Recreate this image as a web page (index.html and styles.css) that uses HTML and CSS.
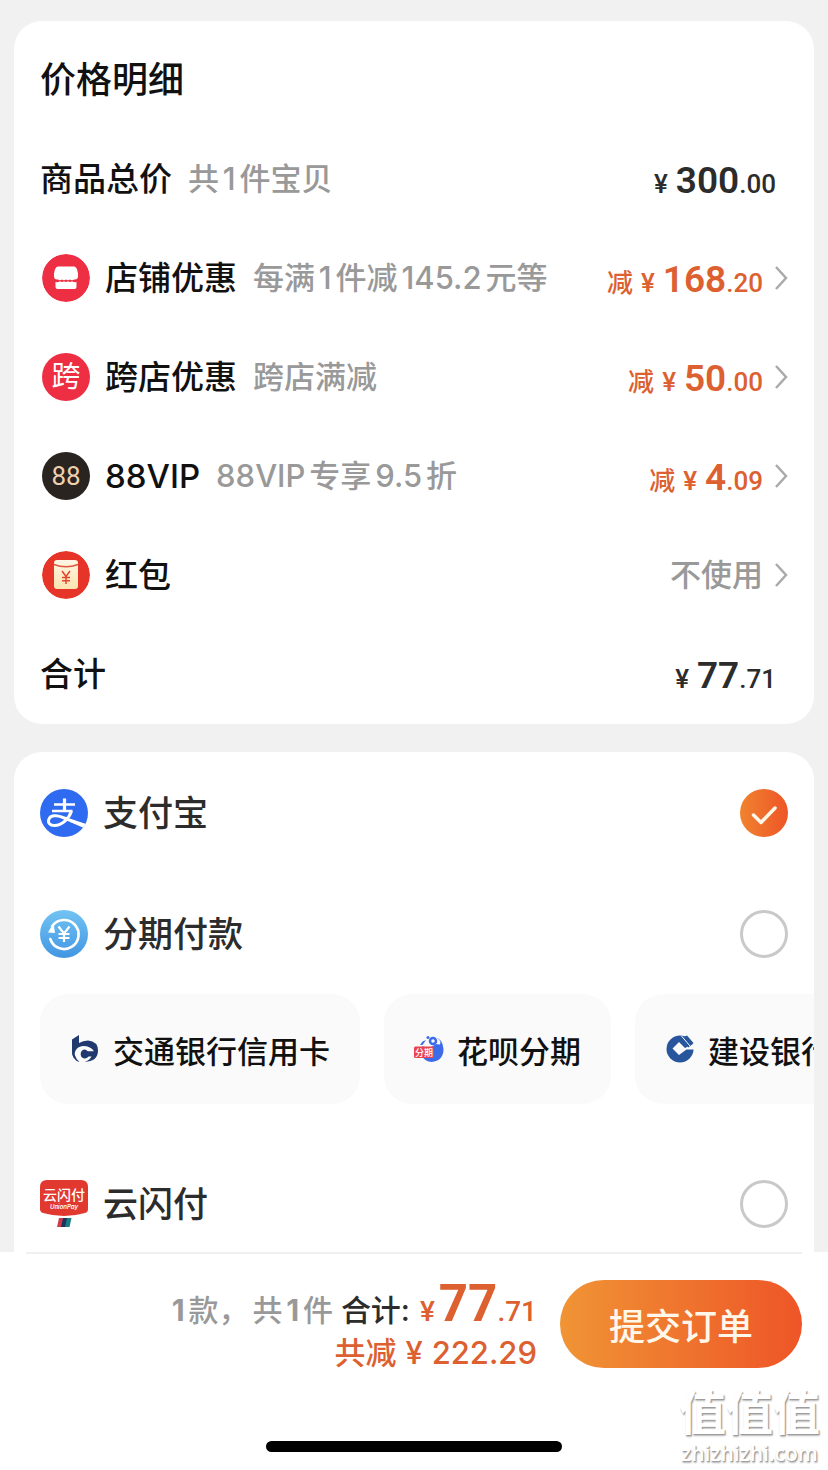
FILE: index.html
```html
<!DOCTYPE html>
<html lang="zh-CN">
<head>
<meta charset="utf-8">
<meta name="viewport" content="width=device-width, initial-scale=1">
<title>确认订单</title>
<link rel="stylesheet" href="styles.css">
</head>
<body>
<main class="content">
  <section class="card prices">
    <h1 class="title">价格明细</h1>
    <div class="row">
      <span class="label">商品总价</span><span class="note">共1件宝贝</span>
      <span class="amount plain"><span class="yen">¥</span><b>300</b><span>.00</span></span>
    </div>
    <div class="row">
      <svg class="badge" viewBox="0 0 48 48" aria-hidden="true"><circle cx="24" cy="24" r="24" fill="#ee2f43"/><path d="M16 12.500h16q3 0 4 7v2.500q0 4-4 3.500-2 1.500-4 0-2 1.500-4 0-2 1.500-4 0-2 1.500-4 0-4 .5-4-3.500v-2.500q1-7 4-7z" fill="#fff"/><path d="M13.500 28q2.500.5 4.500-.8 2 1.500 4 0 2 1.500 4 0 2 1.500 4 0 2 1.300 4.500.8v5q0 2-2 2h-17q-2 0-2-2z" fill="#fff"/></svg>
      <span class="label">店铺优惠</span><span class="note">每满1件减145.2元等</span>
      <button class="amount link"><span class="cut">减</span><span class="yen">¥</span><b>168</b><span>.20</span><svg class="chev" viewBox="0 0 14 26" aria-hidden="true"><path d="M2 2l10 11L2 24"/></svg></button>
    </div>
    <div class="row">
      <span class="badge badge-red" aria-hidden="true">跨</span>
      <span class="label">跨店优惠</span><span class="note">跨店满减</span>
      <button class="amount link"><span class="cut">减</span><span class="yen">¥</span><b>50</b><span>.00</span><svg class="chev" viewBox="0 0 14 26" aria-hidden="true"><path d="M2 2l10 11L2 24"/></svg></button>
    </div>
    <div class="row">
      <span class="badge badge-vip" aria-hidden="true">88</span>
      <span class="label">88VIP</span><span class="note">88VIP专享9.5折</span>
      <button class="amount link"><span class="cut">减</span><span class="yen">¥</span><b>4</b><span>.09</span><svg class="chev" viewBox="0 0 14 26" aria-hidden="true"><path d="M2 2l10 11L2 24"/></svg></button>
    </div>
    <div class="row">
      <svg class="badge" viewBox="0 0 48 48" aria-hidden="true"><defs><linearGradient id="env" x1="0" y1="0" x2="0" y2="1"><stop offset="0" stop-color="#fff6e4"/><stop offset="1" stop-color="#fce3b0"/></linearGradient></defs><circle cx="24" cy="24" r="24" fill="#e63528"/><rect x="12" y="9" width="24" height="29" rx="3" fill="url(#env)"/><path d="M12 13.500q12 4.500 24 0" fill="none" stroke="#e2553f" stroke-width="1.500"/><path d="M20 20l4 5.500 4-5.500M24 25.500V33M20 26.500h8M20 29.700h8" fill="none" stroke="#e2452f" stroke-width="1.500"/></svg>
      <span class="label">红包</span>
      <button class="link unused">不使用<svg class="chev" viewBox="0 0 14 26" aria-hidden="true"><path d="M2 2l10 11L2 24"/></svg></button>
    </div>
    <div class="row">
      <span class="label">合计</span>
      <span class="amount plain"><span class="yen">¥</span><b>77</b><span>.71</span></span>
    </div>
  </section>

  <section class="card pay">
    <label class="method">
      <svg class="badge" viewBox="0 0 48 48" aria-hidden="true"><defs><clipPath id="disc"><circle cx="24" cy="24" r="24"/></clipPath></defs><circle cx="24" cy="24" r="24" fill="#2f6bf0"/><g clip-path="url(#disc)" fill="none" stroke="#fff"><path d="M14 15.500h21M12 22h20.500" stroke-width="2.600"/><path d="M24.500 9.500V22" stroke-width="3.200"/><path d="M31.500 22C29 29.500 22 36.500 14.500 36.500c-5 0-7-3-5.500-6.500 1.500-3.500 7-4.500 13-1.800C29 31.200 38 34 50 38" stroke-width="3"/><path d="M31 30.500l14 4.500-1 4-14-6z" fill="#fff" stroke="none"/></g></svg>
      <span class="name">支付宝</span>
      <span class="pick"><input type="radio" name="pay" checked><svg class="tick" viewBox="0 0 48 48" aria-hidden="true"><path d="M13.500 26l7.500 7.500L35 19"/></svg></span>
    </label>
    <label class="method">
      <svg class="badge" viewBox="0 0 48 48" aria-hidden="true"><defs><linearGradient id="sky" x1="0" y1="0" x2="0" y2="1"><stop offset="0" stop-color="#72c3f3"/><stop offset="1" stop-color="#4296e2"/></linearGradient></defs><circle cx="24" cy="24" r="24" fill="url(#sky)"/><path d="M12 16.500A14.500 14.500 0 1 1 10.300 29" fill="none" stroke="#fff" stroke-width="2.600" stroke-linecap="round"/><path d="M13.500 13l1.500 10-7-.5z" fill="#fff"/><path d="M18.500 16.500l5.500 7 5.500-7M24 23.500V32M18.500 24h11M18.500 28h11" fill="none" stroke="#fff" stroke-width="2.200"/></svg>
      <span class="name">分期付款</span>
      <span class="pick"><input type="radio" name="pay"><svg class="tick" viewBox="0 0 48 48" aria-hidden="true"><path d="M13.500 26l7.500 7.500L35 19"/></svg></span>
    </label>
    <div class="tiles">
      <button class="tile"><svg class="logo" viewBox="0 0 30 30" aria-hidden="true"><path d="M2 5.500L9 1v8q4-2.500 9-2.500 10 1 10 10 0 10.500-13 11.500Q8 28.500 4 24 2 21 2 16z" fill="#20396f"/><path d="M4 27q-1-14 9-15 8 0 11 5.500H18q-4-4-7 .5-1.500 5 3 6.500 3 .3 4.500-2H25q-3.500 6-10 6.500z" fill="#fafafa"/><path d="M5 13.500Q2.500 22 9.500 28 2 26 2 17z" fill="#20396f"/><path d="M14.500 17.500h11v4h-8q-3 2-4-.500-.5-2.500 1-3.500z" fill="#20396f"/><path d="M27 16.500q0 10.500-12 11.500 5-2 7-6.500z" fill="#20396f"/></svg>交通银行信用卡</button>
      <button class="tile"><svg class="logo" viewBox="0 0 30 30" aria-hidden="true"><path d="M8.500 7.500l3.500-1.500-3.500 5H6zM20 2.500q9 2.500 9.500 12.500 0 12-12 13-6-.5-9-5V12q5 3 9 1.500 8-.5 9-4.500 0-4-6.500-6.500z" fill="#3e6bea"/><circle cx="19" cy="7" r="3" fill="none" stroke="#3e6bea" stroke-width="2.500"/><path d="M22 10l6 1-2 8-10-5z" fill="#3e6bea"/><circle cx="14" cy="3.500" r="1.500" fill="#3e6bea"/><rect y="12.500" width="20" height="11.500" rx="1.500" fill="#e84352"/><text class="mini" x="10" y="21.500">分期</text></svg>花呗分期</button>
      <button class="tile"><svg class="logo" viewBox="0 0 30 30" aria-hidden="true"><circle cx="15" cy="15" r="13.500" fill="#28569d"/><path d="M14 8l6 6L30 9v6.500h-8.500L14 21l-6.500-6.500z" fill="#fafafa"/><path d="M16 4l7.500 9.500 5-4.500L22 1.500z" fill="#28569d"/><path d="M16.500 2l8.500 10" stroke="#fafafa" stroke-width="1"/></svg>建设银行</button>
    </div>
    <label class="method last">
      <svg class="badge" viewBox="0 0 48 48" aria-hidden="true"><path d="M7 0h34q7 0 7 7v22q0 3-3 4-21 6-42 0-3-1-3-4V7q0-7 7-7z" fill="#e1382f"/><text class="union" x="24" y="20">云闪付</text><text class="union-en" x="24" y="28.500">UnionPay</text><path d="M19 38h5l-2 9h-5z" fill="#cc3b4b"/><path d="M23 38h5l-2 9h-5z" fill="#1f3557"/><path d="M27 38h4.500l-2 9H25z" fill="#177d87"/></svg>
      <span class="name">云闪付</span>
      <span class="pick"><input type="radio" name="pay"><svg class="tick" viewBox="0 0 48 48" aria-hidden="true"><path d="M13.500 26l7.500 7.500L35 19"/></svg></span>
    </label>
  </section>
</main>

<footer class="bar">
  <div class="checkout">
    <div class="sums">
      <div class="sum"><span class="count"><b>1</b>款，</span><span class="count">共<b>1</b>件</span><span class="total">合计:</span><span class="due"><span>¥</span><b>77</b><span>.71</span></span></div>
      <div class="saved"><span>共减</span><span>¥</span><span>222.29</span></div>
    </div>
    <button class="submit">提交订单</button>
  </div>
  <div class="home"></div>
  <div class="mark"><span class="mark-cn">值值值</span><span class="mark-en">zhizhizhi.com</span></div>
</footer>
</body>
</html>
```
FILE: styles.css
```css
* { box-sizing: border-box; }

body {
  margin: 0;
  min-height: 100vh;
  display: flex;
  flex-direction: column;
  background: #f1f1f1;
  color: #111;
  font-family: Inter, "Noto Sans CJK SC", sans-serif;
  text-autospace: normal;
}

button {
  border: 0;
  padding: 0;
  background: none;
  color: inherit;
  font: inherit;
  cursor: pointer;
}

.content {
  flex: 1;
  display: flex;
  flex-direction: column;
  gap: 28px;
  padding: 21px 14px 0;
}

.card {
  background: #fff;
  border-radius: 28px;
  padding: 0 26px;
}

.title {
  margin: 0;
  padding: 11px 0 0;
  line-height: 97px;
  font-size: 36px;
  font-weight: 500;
}

.prices { padding-bottom: 1px; }

.row {
  display: flex;
  align-items: center;
  height: 99px;
}

.badge {
  flex: none;
  width: 48px;
  height: 48px;
  margin: 0 15px 0 2px;
  border-radius: 50%;
}

.badge-red, .badge-vip {
  display: flex;
  align-items: center;
  justify-content: center;
  color: #fff;
  background: #ee2f43;
  font-size: 29px;
  line-height: 48px;
}

.badge-vip {
  background: #2a2420;
  color: #efd0ae;
  font-family: Roboto, sans-serif;
  font-size: 26px;
}

.label {
  font-size: 33px;
  font-weight: 500;
  line-height: 48px;
}

.note {
  margin-left: 16px;
  color: #999;
  font-size: 31px;
  font-weight: 500;
  line-height: 48px;
}

.amount {
  display: flex;
  align-items: baseline;
  margin-left: auto;
  color: #2c2c2c;
  font-family: Roboto, "Noto Sans CJK SC", sans-serif;
  font-size: 26px;
  font-weight: 500;
  line-height: 48px;
}

.amount > span, .amount > b { padding-top: 8px; }
.amount b { font-size: 37px; font-weight: 600; }
.amount .yen { margin-right: 8px; }
.amount .cut { margin-right: 8px; }
.plain { padding-right: 12px; }

.link { display: flex; color: #dc6030; }

.unused {
  align-items: center;
  margin-left: auto;
  color: #999;
  font-size: 31px;
  font-weight: 500;
  line-height: 48px;
}

.chev {
  align-self: center;
  width: 14px;
  height: 26px;
  margin-left: 11px;
  fill: none;
  stroke: #aaa;
  stroke-width: 2.5;
}

.pay {
  flex: 1;
  border-radius: 28px 28px 0 0;
}

.method {
  display: flex;
  align-items: center;
  height: 121px;
  cursor: pointer;
}

.last { height: 95px; }

.method .badge { margin-left: 0; border-radius: 0; }

.name {
  color: #2c2c2c;
  font-size: 35px;
  font-weight: 500;
  line-height: 48px;
}

.pick { display: grid; margin-left: auto; }
.pick > * { grid-area: 1 / 1; }

.pick input {
  appearance: none;
  width: 48px;
  height: 48px;
  margin: 0;
  border: 3px solid #c9c9c9;
  border-radius: 50%;
}

.pick input:checked {
  border: 0;
  background: linear-gradient(90deg, #f0832f, #ee5527);
}

.tick {
  visibility: hidden;
  width: 48px;
  height: 48px;
  fill: none;
  stroke: #fff8ea;
  stroke-width: 3.5;
  stroke-linecap: round;
  stroke-linejoin: round;
  pointer-events: none;
}

input:checked + .tick { visibility: visible; }

.tiles {
  display: flex;
  gap: 24px;
  margin-right: -26px;
  margin-bottom: 52px;
  overflow: hidden;
}

.tile {
  flex: none;
  display: flex;
  align-items: center;
  gap: 13px;
  height: 110px;
  padding: 0 30px;
  border-radius: 28px;
  background: #fafafa;
  font-size: 31px;
  font-weight: 500;
  white-space: nowrap;
}

.logo { width: 30px; height: 30px; }

.mini, .union, .union-en { fill: #fff; text-anchor: middle; }
.mini { font-size: 9px; }
.union { font-size: 14px; font-weight: 500; }
.union-en { font-size: 6px; font-style: italic; font-weight: 600; }

.bar {
  position: relative;
  background: #fff;
  padding: 0 26px 18px;
}

.checkout {
  display: flex;
  align-items: center;
  justify-content: flex-end;
  gap: 23px;
  padding: 18px 0 65px;
  border-top: 2px solid #f0f0f0;
}

.sums { padding-top: 6px; }

.sum {
  display: flex;
  align-items: baseline;
  justify-content: flex-end;
  height: 52px;
  line-height: 52px;
  font-size: 30px;
}

.count { color: #999; font-weight: 500; }
.count + .count { margin-left: 4px; }

.total {
  margin-left: 8px;
  color: #2c2c2c;
  font-weight: 500;
  text-autospace: no-autospace;
}

.due {
  margin-left: 10px;
  color: #dc6030;
  font-family: Roboto, sans-serif;
  font-size: 28px;
  font-weight: 500;
}

.due b { margin-left: 4px; font-size: 51px; }

.saved {
  display: flex;
  justify-content: flex-end;
  gap: 9px;
  color: #dc6030;
  font-size: 31px;
  font-weight: 500;
  line-height: 46px;
}

.submit {
  width: 242px;
  height: 88px;
  border-radius: 44px;
  background: linear-gradient(90deg, #f09435, #ee5527);
  color: #fff8ea;
  font-size: 36px;
  font-weight: 500;
}

.home {
  width: 296px;
  height: 11px;
  margin: 0 auto;
  border-radius: 6px;
  background: #000;
}

.mark {
  position: absolute;
  right: 8px;
  bottom: 2px;
  display: flex;
  flex-direction: column;
  align-items: center;
  color: #fff;
  text-shadow: 1px 1px 1px #999, 1px 2px 2px #bbb;
}

.mark-cn { font-size: 47px; font-weight: 700; line-height: 50px; }
.mark-en { font-family: "Open Sans", sans-serif; font-size: 21px; font-weight: 600; line-height: 30px; }
```
